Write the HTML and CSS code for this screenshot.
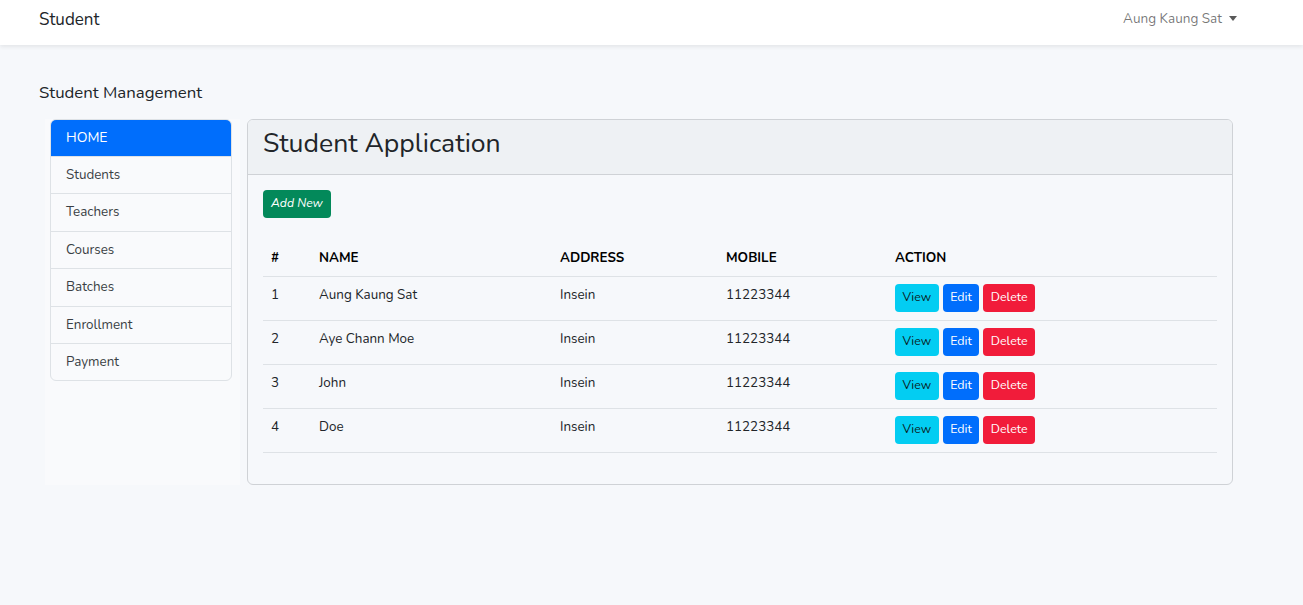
FILE: index.html
```html
<!DOCTYPE html>
<html lang="en">
<head>
<meta charset="utf-8">
<title>Student</title>
<link rel="stylesheet" href="styles.css">
</head>
<body>
<nav class="navbar">
  <a class="brand" href="#">Student</a>
  <a class="user" href="#">Aung Kaung Sat <span class="caret"></span></a>
</nav>
<main class="main">
  <h5 class="page-title">Student Management</h5>
  <div class="layout">
    <aside class="sidebar">
      <div class="list">
        <a class="item active" href="#">HOME</a>
        <a class="item" href="#">Students</a>
        <a class="item" href="#">Teachers</a>
        <a class="item" href="#">Courses</a>
        <a class="item" href="#">Batches</a>
        <a class="item" href="#">Enrollment</a>
        <a class="item" href="#">Payment</a>
      </div>
    </aside>
    <section class="card">
      <div class="card-header"><h2 class="card-title">Student Application</h2></div>
      <div class="card-body">
        <a class="btn btn-success btn-add" href="#"><i>Add New</i></a>
        <table class="table">
          <thead>
            <tr><th class="c1">#</th><th class="c2">NAME</th><th class="c3">ADDRESS</th><th class="c4">MOBILE</th><th>ACTION</th></tr>
          </thead>
          <tbody>
            <tr><td>1</td><td>Aung Kaung Sat</td><td>Insein</td><td>11223344</td><td><div class="actions"><a class="btn btn-info" href="#">View</a><a class="btn btn-primary" href="#">Edit</a><a class="btn btn-danger" href="#">Delete</a></div></td></tr>
            <tr><td>2</td><td>Aye Chann Moe</td><td>Insein</td><td>11223344</td><td><div class="actions"><a class="btn btn-info" href="#">View</a><a class="btn btn-primary" href="#">Edit</a><a class="btn btn-danger" href="#">Delete</a></div></td></tr>
            <tr><td>3</td><td>John</td><td>Insein</td><td>11223344</td><td><div class="actions"><a class="btn btn-info" href="#">View</a><a class="btn btn-primary" href="#">Edit</a><a class="btn btn-danger" href="#">Delete</a></div></td></tr>
            <tr><td>4</td><td>Doe</td><td>Insein</td><td>11223344</td><td><div class="actions"><a class="btn btn-info" href="#">View</a><a class="btn btn-primary" href="#">Edit</a><a class="btn btn-danger" href="#">Delete</a></div></td></tr>
          </tbody>
        </table>
      </div>
    </section>
  </div>
</main>
</body>
</html>
```
FILE: styles.css
```css
* { box-sizing: border-box; }
html, body { margin: 0; padding: 0; }
body {
  background: #f6f8fb;
  font-family: "Nunito", "Open Sans", "Liberation Sans", sans-serif;
  font-size: 14.4px;
  line-height: 1.6;
  color: #212529;
  min-height: 605px;
}
a { text-decoration: none; }

.navbar {
  height: 45px;
  background: #fff;
  box-shadow: 0 2px 4px rgba(0,0,0,.075);
  display: flex;
  align-items: center;
  justify-content: space-between;
  padding: 0 66px 0 39px;
}
.brand { color: #212529; font-size: 17px; line-height: 1; margin-top: -6px; }
.user { color: rgba(0,0,0,.55); font-size: 13.5px; display: flex; align-items: center; gap: 7px; margin-top: -7px; }
.caret {
  width: 0; height: 0;
  border-left: 4px solid transparent;
  border-right: 4px solid transparent;
  border-top: 5px solid rgba(0,0,0,.65);
  margin-top: -2px;
}

.main { padding: 37px 0 0 39px; }
.page-title {
  margin: 0 0 15px;
  font-size: 16.8px;
  font-weight: 400;
  line-height: 21.6px;
  color: #212529;
}
.layout { display: flex; align-items: stretch; margin-left: 6px; }
.sidebar {
  width: 195px;
  padding: 0 8px 0 5px;
  background: #f9fafc;
  flex: none;
}
.list {
  display: flex;
  flex-direction: column;
  border: 1px solid #dee2e6;
  border-radius: 6px;
  overflow: hidden;
}
.item {
  display: block;
  padding: 7px 15px;
  line-height: 22.4px;
  font-size: 13.4px;
  color: #3a3f44;
  border-top: 1px solid #dee2e6;
}
.item:first-child { border-top: none; }
.item.active { background: #006efc; color: #fff; font-size: 14px; }

.card {
  width: 986px;
  margin-left: 7px;
  border: 1px solid #cfd2d6;
  border-radius: 6px;
  background: #f6f8fb;
  overflow: hidden;
}
.card-header {
  background: #eef1f4;
  border-bottom: 1px solid #cfd2d6;
  padding: 6px 15px 14px;
}
.card-title {
  margin: 0;
  font-size: 26.6px;
  font-weight: 400;
  line-height: 34px;
  color: #212529;
}
.card-body { padding: 15px 15px 16px; }

.btn {
  display: inline-flex;
  align-items: center;
  height: 28px;
  padding: 0 7.5px;
  border-radius: 4px;
  font-size: 12.4px;
  line-height: 1;
  color: #fff;
}
.btn-add { font-size: 12.2px; margin-bottom: 20px; padding: 0 8px; }
.btn-add i { font-style: italic; }
.btn-success { background: #03895a; }
.btn-info { background: #03cdf2; color: #0b1e25; }
.btn-primary { background: #006efc; }
.btn-danger { background: #f11c3a; }

.table { width: 954px; border-collapse: collapse; margin: 0 0 15px; }
.table th {
  text-align: left;
  font-weight: 700;
  font-size: 13.4px;
  color: #000;
  padding: 8px 8px 7px;
  line-height: 23px;
  border-bottom: 1px solid #dee2e6;
}
.table td {
  vertical-align: top;
  padding: 7px 8px 8px;
  line-height: 22px;
  font-size: 13.4px;
  border-bottom: 1px solid #dee2e6;
}
.c1 { width: 48px; }
.c2 { width: 241px; }
.c3 { width: 166px; }
.c4 { width: 169px; }
.actions { display: flex; gap: 4px; }
```
